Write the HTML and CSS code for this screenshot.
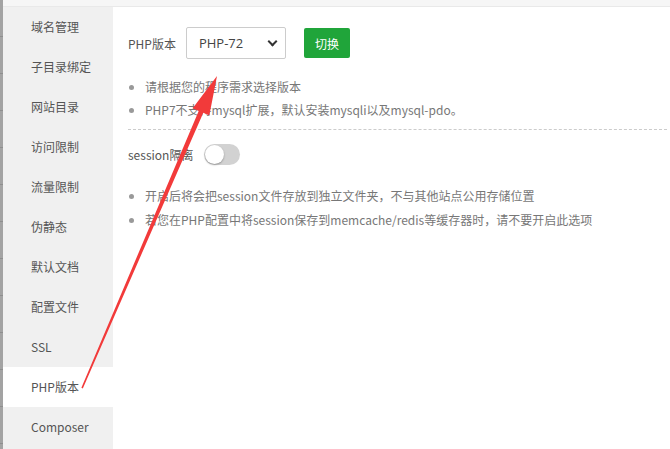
FILE: index.html
```html
<!DOCTYPE html>
<html lang="zh-cn">

<head>
  <meta charset="UTF-8">
  <meta name="viewport" content="width=device-width, initial-scale=1.0">
  <title> PHP版本 </title>
  <link rel="stylesheet" href="styles.css">
</head>

<body>
  <div class="page-edge"></div>
  <div class="layer">
    <div class="layer-top"></div>
    <div class="layer-body">
      <ul class="menu">
        <li>域名管理</li>
        <li>子目录绑定</li>
        <li>网站目录</li>
        <li>访问限制</li>
        <li>流量限制</li>
        <li>伪静态</li>
        <li>默认文档</li>
        <li>配置文件</li>
        <li>SSL</li>
        <li class="active">PHP版本</li>
        <li>Composer</li>
      </ul>
      <div class="content">
        <div class="line">
          <span class="tname">PHP版本</span>
          <div class="select">PHP-72<span class="caret"></span></div>
          <button class="btn-green">切换</button>
        </div>
        <ul class="help">
          <li>请根据您的程序需求选择版本</li>
          <li>PHP7不支持mysql扩展，默认安装mysqli以及mysql-pdo。</li>
        </ul>
        <div class="divider"></div>
        <div class="line session">
          <span class="tname">session隔离</span>
          <span class="switch"><i></i></span>
        </div>
        <ul class="help help-2">
          <li>开启后将会把session文件存放到独立文件夹，不与其他站点公用存储位置</li>
          <li>若您在PHP配置中将session保存到memcache/redis等缓存器时，请不要开启此选项</li>
        </ul>
      </div>
    </div>
  </div>
  <svg class="arrow" width="670" height="449" viewBox="0 0 670 449">
    <polygon points="217,76 209.3,115.5 203.3,112.8 82.8,388.4 81.4,387.8 198.7,110.9 192.7,108.3" fill="#f23a3a" />
  </svg>
</body>

</html>
```

FILE: styles.css
```css
* {
  margin: 0;
  padding: 0;
}

ul {
  list-style: none;
}

body {
  display: flex;
  width: 670px;
  height: 449px;
  overflow: hidden;
  font-family: "Microsoft YaHei", "Noto Sans CJK SC", sans-serif;
  font-size: 12px;
  color: #555;
  background: #fff;
}

.page-edge {
  width: 3px;
  background: repeating-linear-gradient(#a3a3a3 0, #a3a3a3 36px, #8e8e8e 36px, #8e8e8e 37px);
}

.layer {
  flex: 1;
  display: flex;
  flex-direction: column;
}

.layer-top {
  height: 6px;
  background: #f6f6f6;
  border-bottom: 1px solid #e9e9e9;
}

.layer-body {
  flex: 1;
  display: flex;
}

.menu {
  width: 110px;
  background: #f0f0f0;
}

.menu li {
  height: 40px;
  line-height: 40px;
  padding-left: 28px;
  color: #555;
}

.menu .active {
  background: #fff;
}

.content {
  flex: 1;
  padding: 20px 3px 0 15px;
}

.line {
  display: flex;
  align-items: center;
  height: 32px;
}

.tname {
  margin-right: 10px;
}

.select {
  position: relative;
  width: 86px;
  height: 30px;
  line-height: 30px;
  padding-left: 12px;
  border: 1px solid #ccc;
  border-radius: 2px;
  font-family: "Open Sans", "Noto Sans CJK SC", sans-serif;
  font-size: 13px;
  color: #444;
}

.caret {
  position: absolute;
  right: 9px;
  top: 10px;
  width: 5px;
  height: 5px;
  border-right: 2px solid #333;
  border-bottom: 2px solid #333;
  transform: rotate(45deg);
}

.btn-green {
  margin-left: 18px;
  width: 46px;
  height: 30px;
  border: none;
  border-radius: 2px;
  background: #20a53a;
  color: #fff;
  font-family: "Microsoft YaHei", "Noto Sans CJK SC", sans-serif;
  font-size: 12px;
}

.help {
  margin-top: 16px;
  padding-left: 17px;
  color: #777;
  list-style: disc;
}

.help li {
  line-height: 23px;
}

.help li::marker {
  color: #999;
}

.divider {
  margin-top: 8px;
  border-top: 1px dashed #ccc;
}

.session {
  margin-top: 8px;
  height: 32px;
}

.switch {
  margin-left: 1px;
  width: 35px;
  height: 21px;
  border-radius: 11px;
  background: #d2d2d2;
  display: flex;
  align-items: center;
  padding-left: 1px;
}

.switch i {
  width: 19px;
  height: 19px;
  border-radius: 50%;
  background: #fff;
  box-shadow: 0 1px 2px rgba(0, 0, 0, .3);
}

.help-2 {
  margin-top: 14px;
}

.help-2 li {
  line-height: 24px;
}

.arrow {
  position: absolute;
  left: 0;
  top: 0;
  pointer-events: none;
}
```
